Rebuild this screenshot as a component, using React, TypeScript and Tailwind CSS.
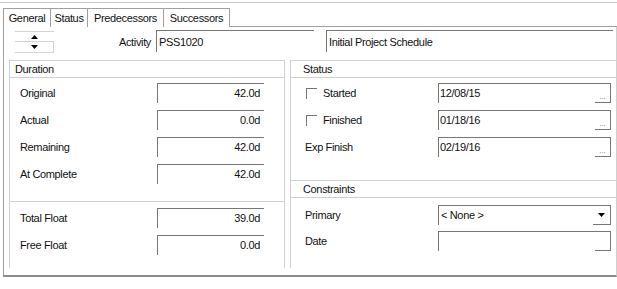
import React from "react";

const Up = () => (
  <svg width="7" height="4" viewBox="0 0 7 4"><polygon points="3.5,0 7,4 0,4" fill="#000" /></svg>
);
const Down = () => (
  <svg width="7" height="4" viewBox="0 0 7 4"><polygon points="0,0 7,0 3.5,4" fill="#000" /></svg>
);

function NumField({ value }: { value: string }) {
  return (
    <div className="w-[107px] h-[20px] border-t border-l border-[#767676] bg-white flex items-center justify-end pr-[4px]">
      {value}
    </div>
  );
}

function DateField({ value, dots = true }: { value: string; dots?: boolean }) {
  return (
    <div className="w-[173px] h-[20px] border-t border-l border-[#767676] bg-white flex">
      <div className="flex-1 flex items-center pl-[1px] pb-[1px]">{value}</div>
      <div className="w-[16px] h-full border-r border-b border-[#767676] flex items-end justify-center pb-[1px]">
        {dots ? <span className="text-[8px] leading-[8px] tracking-normal text-[#7a7a7a]">...</span> : null}
      </div>
    </div>
  );
}

function Checkbox() {
  return <div className="w-[11px] h-[11px] border-t border-l border-[#767676] bg-white" />;
}

function NumRow({ label, value }: { label: string; value: string }) {
  return (
    <div className="flex h-[20px] items-center">
      <div className="w-[147px] pl-[10px]">{label}</div>
      <NumField value={value} />
    </div>
  );
}

export default function App() {
  return (
    <div className="w-[617px] h-[289px] bg-white overflow-hidden text-[11px] tracking-[-0.35px] text-[#111] font-['Liberation_Sans',Arial,sans-serif] leading-none">
      <div className="h-[3px] border-b border-[#c8c8c8]" />
      <div className="mt-[5px] flex h-[19px] pl-[3px]">
        <div className="w-[47px] h-[19px] border-t border-l border-[#a0a0a0] flex items-center justify-center">General</div>
        <div className="w-[37px] h-[19px] border-t border-l border-[#a0a0a0] flex items-center justify-center">Status</div>
        <div className="w-[76px] h-[19px] border-t border-l border-[#a0a0a0] flex items-center justify-center">Predecessors</div>
        <div className="w-[67px] h-[19px] border-t border-l border-r border-[#a0a0a0] flex items-center justify-center">Successors</div>
        <div className="flex-1 h-[19px] border-b border-[#a0a0a0]" />
      </div>
      <div className="ml-[3px] w-[614px] h-[250px] border-l border-r border-b-2 border-l-[#a0a0a0] border-r-[#d0d0d0] border-b-[#8c8c8c] flex flex-col">
        <div className="flex h-[22px] mt-[3px]">
          <div className="ml-[11px] mt-[1px] w-[39px] h-[22px] border-t border-[#d4d4d4] flex flex-col">
            <div className="h-[10px] border-b border-[#d4d4d4] flex items-center justify-center">
              <Up />
            </div>
            <div className="h-[11px] border-b border-r border-[#d4d4d4] flex items-center justify-center">
              <Down />
            </div>
          </div>
          <div className="w-[102px] flex items-center justify-end pr-[5px] pt-[3px]">Activity</div>
          <div className="w-[158px] h-[22px] border-t border-l border-[#767676] bg-white flex items-center pl-[2px] pt-[2px]">PSS1020</div>
          <div className="ml-[12px] w-[287px] h-[22px] border-t border-l border-[#767676] bg-white flex items-center pl-[2px] pt-[2px]">Initial Project Schedule</div>
        </div>
        <div className="flex mt-[8px] h-[208px]">
          <div className="ml-[5px] w-[276px] h-[208px] border-l border-r border-[#d0d0d0] flex flex-col">
            <div className="h-[18px] border-t border-b border-[#d0d0d0] flex items-center pl-[5px]">Duration</div>
            <div className="mt-[5px] flex flex-col gap-[7px]">
              <NumRow label="Original" value="42.0d" />
              <NumRow label="Actual" value="0.0d" />
              <NumRow label="Remaining" value="42.0d" />
              <NumRow label="At Complete" value="42.0d" />
            </div>
            <div className="mt-[17px] h-px bg-[#d0d0d0]" />
            <div className="mt-[6px] flex flex-col gap-[7px]">
              <NumRow label="Total Float" value="39.0d" />
              <NumRow label="Free Float" value="0.0d" />
            </div>
          </div>
          <div className="ml-[5px] flex-1 h-[208px] border-l border-[#d0d0d0] flex flex-col">
            <div className="h-[18px] border-t border-b border-[#d0d0d0] flex items-center pl-[12px]">Status</div>
            <div className="mt-[5px] flex flex-col gap-[7px]">
              <div className="flex h-[20px] items-center">
                <div className="w-[147px] pl-[15px] flex items-center">
                  <Checkbox />
                  <span className="ml-[6px]">Started</span>
                </div>
                <DateField value="12/08/15" />
              </div>
              <div className="flex h-[20px] items-center">
                <div className="w-[147px] pl-[15px] flex items-center">
                  <Checkbox />
                  <span className="ml-[6px]">Finished</span>
                </div>
                <DateField value="01/18/16" />
              </div>
              <div className="flex h-[20px] items-center">
                <div className="w-[147px] pl-[14px]">Exp Finish</div>
                <DateField value="02/19/16" />
              </div>
            </div>
            <div className="mt-[23px] h-[18px] border-t border-b border-[#d0d0d0] flex items-center pl-[12px]">Constraints</div>
            <div className="mt-[7px] flex flex-col gap-[6px]">
              <div className="flex h-[20px] items-center">
                <div className="w-[147px] pl-[14px]">Primary</div>
                <div className="w-[173px] h-[20px] border-t border-l border-[#767676] bg-white flex">
                  <div className="flex-1 flex items-center pl-[2px]">&lt; None &gt;</div>
                  <div className="w-[18px] h-full border-r border-b border-[#767676] flex items-center justify-center">
                    <Down />
                  </div>
                </div>
              </div>
              <div className="flex h-[20px] items-center">
                <div className="w-[147px] pl-[14px]">Date</div>
                <DateField value="" dots={false} />
              </div>
            </div>
          </div>
        </div>
      </div>
    </div>
  );
}
